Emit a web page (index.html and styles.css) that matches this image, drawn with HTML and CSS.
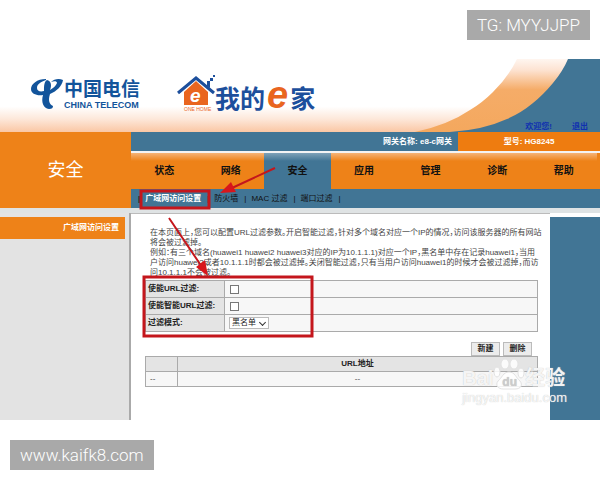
FILE: index.html
```html
<!DOCTYPE html>
<html lang="zh-CN">
<head>
    <meta charset="UTF-8">
    <meta name="viewport" content="width=device-width, initial-scale=1.0">
    <title>安全 - 广域网访问设置</title>
    <link rel="stylesheet" href="styles.css">
</head>
<body>
    <div class="strip strip-top"><span class="tag">TG: MYYJJPP</span></div>

    <div class="screen">
        <header class="header">
            <svg class="swoosh" width="280" height="73" viewBox="0 0 280 73" aria-hidden="true">
                <defs>
                    <linearGradient id="swooshFill" x1="0" y1="0" x2="0" y2="1">
                        <stop offset="0" stop-color="#fff6f0"/>
                        <stop offset="0.15" stop-color="#fde3d2"/>
                        <stop offset="0.42" stop-color="#f5ac68"/>
                        <stop offset="1" stop-color="#f4a85e"/>
                    </linearGradient>
                </defs>
                <path fill="url(#swooshFill)" d="M197 0 Q189 17 173 33 Q162 44 150 51 Q128 66 95 73 H150 L250 50 V0 Z"/>
                <path fill="#417595" d="M248 0 Q243 12 233 24 Q223 36 213 44 Q201 54 187 60 Q163 71 130 73 H280 V0 Z"/>
            </svg>
            <div class="telecom">
                <svg width="32" height="32" viewBox="0 0 32 32" aria-hidden="true">
                    <path fill="#12549b" d="M15 1 C6 1 0 6 0 11 C0 16 6 18 12 17 C10 24 12 30 18 31 C21 31 22 30 22 28 C18 26 17 22 19 16 C26 13 31 8 32 2 C28 0 23 1 20 4 C23 3 26 3 26 5 C25 8 22 10 19 12 C21 7 20 3 16 2 C13 4 13 8 13 13 C9 14 6 13 6 10 C6 6 10 4 15 2 Z"/>
                </svg>
                <div class="telecom-name">
                    <span class="telecom-cn">中国电信</span>
                    <span class="telecom-en">CHINA TELECOM</span>
                </div>
            </div>
            <div class="ehome">
                <svg width="38" height="38" viewBox="0 0 38 38" aria-hidden="true">
                    <path fill="#e9651f" d="M7 17 L19 6 L31 17 V30 H7 Z"/>
                    <path fill="none" stroke="#1d4f9c" stroke-width="3" d="M1 18 L19 3 L37 18"/>
                    <path fill="#1d4f9c" d="M30 6 h3 v7 l-3 -2 Z M33 3 h3 v3 h-3 Z M36 0 h2 v2 h-2 Z"/>
                    <text class="house-e" x="13" y="27">e</text>
                    <text class="house-label" x="7" y="36">ONE HOME</text>
                </svg>
                <span class="ehome-name">我的<i>e</i>家</span>
            </div>
            <div class="session">
                <span>欢迎您!</span>
                <a href="#">退出</a>
            </div>
        </header>

        <div class="banner">
            <div class="section-title">安全</div>
            <div class="banner-main">
                <div class="device">
                    <span class="gateway">网关名称: e8-c网关</span>
                    <span class="model">型号: HG8245</span>
                </div>
                <nav class="nav">
                    <a href="#">状态</a>
                    <a href="#">网络</a>
                    <a href="#" class="active">安全</a>
                    <a href="#">应用</a>
                    <a href="#">管理</a>
                    <a href="#">诊断</a>
                    <a href="#">帮助</a>
                </nav>
                <nav class="subnav">
                    <a href="#" class="current">广域网访问设置</a>
                    <a href="#">防火墙</a>
                    <a href="#">MAC 过滤</a>
                    <a href="#">端口过滤</a>
                </nav>
            </div>
        </div>

        <div class="body">
            <aside class="sidebar">
                <a href="#">广域网访问设置</a>
            </aside>
            <main class="content">
                <p class="help">在本页面上，您可以配置URL过滤参数。开启智能过滤，针对多个域名对应一个IP的情况，访问该服务器的所有网站<br>将会被过滤掉。<br>例如：有三个域名(huawei1 huawei2 huawei3对应的IP为10.1.1.1)对应一个IP，黑名单中存在记录huawei1，当用<br>户访问huawei2或者10.1.1.1时都会被过滤掉。关闭智能过滤，只有当用户访问huawei1的时候才会被过滤掉，而访<br>问10.1.1.1不会被过滤。</p>

                <form>
                    <table class="settings">
                        <tr>
                            <th><label for="urlFilter">使能URL过滤:</label></th>
                            <td><input type="checkbox" id="urlFilter"></td>
                        </tr>
                        <tr>
                            <th><label for="smartFilter">使能智能URL过滤:</label></th>
                            <td><input type="checkbox" id="smartFilter"></td>
                        </tr>
                        <tr>
                            <th><label for="mode">过滤模式:</label></th>
                            <td>
                                <div class="select">
                                    <select id="mode">
                                        <option>黑名单</option>
                                        <option>白名单</option>
                                    </select>
                                </div>
                            </td>
                        </tr>
                    </table>

                    <div class="actions">
                        <button type="button">新建</button>
                        <button type="button">删除</button>
                    </div>
                    <table class="urls">
                        <tr><th class="pick"></th><th>URL地址</th></tr>
                        <tr><td class="pick">--</td><td>--</td></tr>
                    </table>
                </form>
            </main>
            <div class="rail"></div>
        </div>

        <!-- red marks over the page -->
        <svg class="marks" width="330" height="300" viewBox="0 0 330 300" aria-hidden="true">
            <g fill="none" stroke="#c4161c" stroke-width="3">
                <rect x="141" y="132" width="68" height="17"/>
                <rect x="144" y="218" width="168" height="59"/>
                <path stroke-width="2" d="M275 109 L232 129 M169 159 L202 208"/>
            </g>
            <path fill="#d8161c" d="M220 134 L231 123 L236 133 Z M208 217 L196 208 L205 201 Z"/>
        </svg>

        <div class="stamp">
            <div class="stamp-name">Bai<span class="paw"><svg width="32" height="32" viewBox="0 0 32 32" aria-hidden="true">
                <g fill="#fff" fill-opacity="0.85" stroke="#e2e2e2" stroke-width="1">
                    <ellipse cx="4" cy="14" rx="3" ry="5"/>
                    <ellipse cx="12" cy="6" rx="4" ry="5"/>
                    <ellipse cx="21" cy="6" rx="4" ry="5"/>
                    <ellipse cx="28" cy="15" rx="3" ry="5"/>
                    <path d="M16 14 C10 14 9 20 5 23 C2 27 5 31 10 31 H22 C28 31 30 27 27 23 C23 20 22 14 16 14 Z"/>
                </g>
            </svg><span class="du">du</span></span>经验</div>
            <div class="stamp-url">jingyan.baidu.com</div>
        </div>
    </div>

    <div class="strip strip-bottom"><span class="tag">www.kaifk8.com</span></div>
</body>
</html>
```

FILE: styles.css
```css
* {
    box-sizing: border-box;
}
body {
    margin: 0;
    background: #fff;
    color: #444;
    font-family: "Liberation Sans", "Noto Sans CJK SC", sans-serif;
    font-size: 8px;
    line-height: 10px;
}
a {
    color: inherit;
    text-decoration: none;
}
.strip {
    display: flex;
    padding: 10px;
}
.strip-top {
    justify-content: flex-end;
    padding-bottom: 19px;
}
.strip-bottom {
    padding-top: 20px;
}
.tag {
    padding: 0 10px;
    background: #a9a9a9;
    color: #fff;
    font-family: Roboto, sans-serif;
    font-size: 17px;
    font-weight: 300;
    line-height: 30px;
}
.screen {
    position: relative;
}

/* header */
.header {
    position: relative;
    display: flex;
    height: 73px;
    padding-left: 31px;
    background: linear-gradient(#fff 65%, #fde8da 82%, #fac7a4);
}
.swoosh {
    position: absolute;
    right: 0;
    top: 0;
}
.telecom {
    display: flex;
    gap: 1px;
    padding-top: 19px;
}
.telecom-name {
    display: flex;
    flex-direction: column;
    color: #12549b;
    font-weight: bold;
}
.telecom-cn {
    font-size: 19px;
    line-height: 23px;
}
.telecom-en {
    font-size: 9px;
    line-height: 9px;
}
.ehome {
    display: flex;
    margin-left: 37px;
    padding-top: 16px;
}
.ehome-name {
    color: #1d4f9c;
    font-size: 25px;
    font-weight: bold;
    line-height: 48px;
}
.ehome-name i {
    margin: 0 2px;
    color: #e9651f;
    font-size: 38px;
    line-height: 38px;
}
.house-e {
    fill: #fff;
    font-size: 19px;
    font-style: italic;
    font-weight: bold;
}
.house-label {
    fill: #e9651f;
    font-size: 5px;
}
.session {
    position: relative;
    display: flex;
    align-items: flex-end;
    gap: 20px;
    margin-left: auto;
    padding-right: 12px;
    color: #1030b0;
    font-weight: bold;
}

/* banner and menus */
.banner {
    display: flex;
    background: #417595;
}
.section-title {
    width: 131px;
    background: #ee8218;
    color: #fff;
    font-size: 18px;
    line-height: 76px;
    text-align: center;
}
.banner-main {
    flex: 1;
}
.device {
    display: flex;
    border-bottom: 2px solid #f4f4f4;
    color: #fff;
    font-weight: bold;
    line-height: 19px;
}
.gateway {
    flex: 1;
    padding-right: 6px;
    text-align: right;
}
.model {
    width: 142px;
    background: #ee7c10;
    text-align: center;
}
.nav {
    display: flex;
    padding-right: 3px;
    background: #ee8218;
    color: #111;
    font-size: 10px;
    font-weight: bold;
    line-height: 36px;
    text-align: center;
}
.nav a {
    flex: 1;
    background: linear-gradient(#f5b478, #ee8218 8px);
}
.nav .active {
    background: linear-gradient(#7fa2b8, #417595 8px);
}
.subnav {
    display: flex;
    padding-left: 7px;
    color: #111;
    line-height: 19px;
}
.subnav a {
    padding-right: 6px;
}
.subnav a::before {
    content: "|";
    padding-right: 5px;
}
.subnav a:last-child::after {
    content: "|";
    padding-left: 6px;
}
.subnav .current {
    color: #fff;
    font-weight: bold;
}
.subnav .current::before {
    color: #111;
}

/* page body */
.body {
    display: flex;
    min-height: 212px;
    border-top: 5px solid #dfe3e4;
}
.sidebar {
    flex: none;
    width: 131px;
    padding: 4px 4px 0 0;
    border-right: 2px solid #aaa;
    background: #e3e3e3;
}
.sidebar a {
    display: block;
    padding-right: 6px;
    background: #ee8218;
    color: #fff;
    font-weight: bold;
    line-height: 22px;
    text-align: right;
}
.content {
    flex: 1;
    min-width: 0;
    padding: 14px 12px 0 14px;
    border-top: 1px solid #bbb;
}
.rail {
    flex: none;
    width: 50px;
    margin-top: 4px;
    background: #417595;
}
.help {
    margin: 0 0 2px;
    padding-left: 5px;
    white-space: nowrap;
    font-feature-settings: "halt";
}
table {
    width: 100%;
    border-collapse: collapse;
    background: #f7f7f7;
}
th,
td {
    height: 17px;
    padding: 0 4px;
    border: 1px solid #aaa;
}
th {
    background: #e4e4e4;
    color: #222;
}
.settings th {
    width: 79px;
    padding: 0 2px;
    text-align: left;
}
.settings input {
    display: block;
    appearance: none;
    width: 9px;
    height: 9px;
    margin: 0 1px;
    border: 1px solid #777;
    background: #fff;
}
.select {
    position: relative;
    width: 40px;
}
.select::after {
    content: "";
    position: absolute;
    right: 4px;
    top: 3px;
    width: 4px;
    height: 4px;
    border: solid #333;
    border-width: 0 1px 1px 0;
    transform: rotate(45deg);
    pointer-events: none;
}
.settings select {
    display: block;
    appearance: none;
    width: 100%;
    height: 12px;
    padding: 0 2px;
    border: 1px solid #bbb;
    border-radius: 0;
    background: #fff;
    color: #222;
    font: inherit;
    line-height: 10px;
}
.actions {
    display: flex;
    justify-content: flex-end;
    gap: 3px;
    padding: 10px 6px 0 0;
}
.actions button {
    width: 29px;
    height: 14px;
    padding: 0;
    border: 1px solid #bbb;
    background: #ececec;
    color: #222;
    font: inherit;
    font-weight: bold;
}
.urls th,
.urls td {
    height: 15px;
    text-align: center;
}
.urls .pick {
    width: 32px;
    text-align: left;
}

/* overlays */
.marks {
    position: absolute;
    left: 0;
    top: 0;
}
.stamp {
    position: absolute;
    right: 33px;
    bottom: 14px;
    color: rgba(255, 255, 255, 0.85);
    text-shadow: 0 0 1px #bbb;
}
.stamp-name {
    display: flex;
    align-items: flex-end;
    font-size: 20px;
    font-weight: bold;
    line-height: 24px;
}
.paw {
    position: relative;
    line-height: 0;
}
.du {
    position: absolute;
    left: 9px;
    bottom: 8px;
    color: #ccc;
    font-size: 12px;
}
.stamp-url {
    font-size: 13px;
    line-height: 16px;
}
```
